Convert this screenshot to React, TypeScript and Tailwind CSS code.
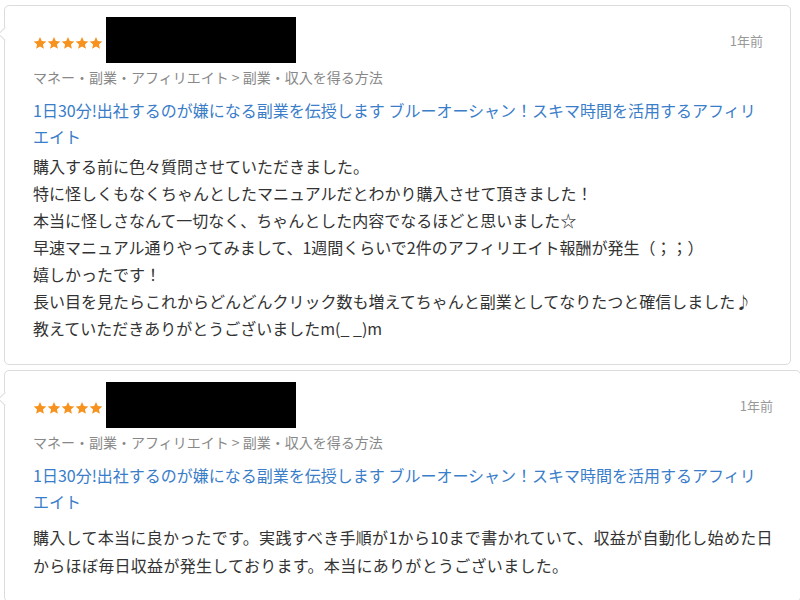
import React from "react";

const Star = () => (
  <svg width="14" height="14" viewBox="0 0 24 24" className="shrink-0">
    <path
      d="M12 1.5l3.1 7.1 7.7.7-5.8 5.1 1.7 7.6L12 18l-6.7 4 1.7-7.6-5.8-5.1 7.7-.7z"
      fill="#f7921e"
    />
  </svg>
);

const Card = ({ wide, body }: { wide: boolean; body: string[] }) => (
  <div
    className={
      "relative ml-[4px] rounded-[5px] border border-[#dcdcdc] bg-white pl-[28px] pr-[27px] pt-[11px] pb-[22px] " +
      (wide ? "w-[797px]" : "w-[787px]")
    }
  >
    <div className="absolute left-[-5px] top-[23px] h-[10px] w-[10px] rotate-45 border-b border-l border-[#dcdcdc] bg-white" />
    <div className="flex items-center">
      <div className="flex items-center pt-[5px]">
        <Star />
        <Star />
        <Star />
        <Star />
        <Star />
      </div>
      <div className="ml-[3px] h-[46px] w-[190px] bg-black" />
      <div className="ml-auto text-[13px] text-[#999] leading-[16px] pt-[1px]">1年前</div>
    </div>
    <div className="mt-[4px] text-[14px] leading-[20px] text-[#888]">
      マネー・副業・アフィリエイト &gt; 副業・収入を得る方法
    </div>
    <div className="mt-[10px] max-w-[735px] text-[16px] leading-[26px] text-[#3a7dc9]">
      1日30分!出社するのが嫌になる副業を伝授します ブルーオーシャン！スキマ時間を活用するアフィリエイト
    </div>
    <div
      className={
        "text-[16px] text-[#333] " +
        (wide ? "mt-[9px] leading-[28px] tracking-[0.3px]" : "mt-[4px] leading-[27px]")
      }
    >
      {body.map((l, i) => (
        <div key={i}>{l}</div>
      ))}
    </div>
  </div>
);

export default function App() {
  return (
    <div
      className="h-[600px] w-[800px] overflow-hidden bg-white pt-[5px]"
      style={{ fontFamily: '"Noto Sans CJK JP", "Noto Sans", sans-serif' }}
    >
      <Card
        wide={false}
        body={[
          "購入する前に色々質問させていただきました。",
          "特に怪しくもなくちゃんとしたマニュアルだとわかり購入させて頂きました！",
          "本当に怪しさなんて一切なく、ちゃんとした内容でなるほどと思いました☆",
          "早速マニュアル通りやってみまして、1週間くらいで2件のアフィリエイト報酬が発生（；；）",
          "嬉しかったです！",
          "長い目を見たらこれからどんどんクリック数も増えてちゃんと副業としてなりたつと確信しました♪",
          "教えていただきありがとうございましたm(_ _)m",
        ]}
      />
      <div className="h-[5px]" />
      <Card
        wide={true}
        body={[
          "購入して本当に良かったです。実践すべき手順が1から10まで書かれていて、収益が自動化し始めた日からほぼ毎日収益が発生しております。本当にありがとうございました。",
        ]}
      />
    </div>
  );
}
